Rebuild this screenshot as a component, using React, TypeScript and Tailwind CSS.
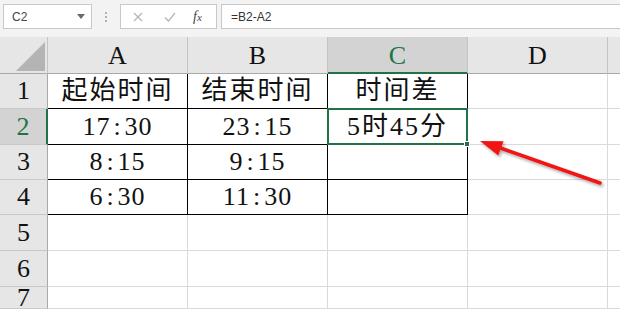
import React from 'react';

const serif = "font-['Liberation_Serif','Noto_Sans_CJK_SC',serif]";

const cols = ['A', 'B', 'C', 'D'];
const rowHeights = ['h-[35px]', 'h-[36px]', 'h-[35px]', 'h-[35px]', 'h-[36px]', 'h-[36px]', 'h-[22px]'];

const data: string[][] = [
  ['起始时间', '结束时间', '时间差', ''],
  ['17:30', '23:15', '5时45分', ''],
  ['8:15', '9:15', '', ''],
  ['6:30', '11:30', '', ''],
  ['', '', '', ''],
  ['', '', '', ''],
  ['', '', '', ''],
];

// SimSun style times: widen the colon like the half-width original
const CellText: React.FC<{ v: string }> = ({ v }) => {
  if (!v.includes(':')) return <span className="tracking-[2px]">{v}</span>;
  const [h, m] = v.split(':');
  return (
    <span className="tracking-[1px]">
      {h}
      <span className="px-[3px]">:</span>
      {m}
    </span>
  );
};

const Toolbar: React.FC = () => (
  <div className="flex h-[37px] items-start bg-[#f3f3f3] pt-[4px]">
    <div className="relative ml-[3px] flex h-[25px] w-[89px] items-center border border-[#c8c8c8] bg-white pl-[8px]">
      <span className="font-['Liberation_Sans',sans-serif] text-[12px] text-[#444]">C2</span>
      <svg className="absolute right-[6px] top-[9px]" width="8" height="5" viewBox="0 0 8 5">
        <path d="M0 0 L8 0 L4 5 Z" fill="#6a6a6a" />
      </svg>
    </div>
    <div className="ml-[12px] flex h-[25px] w-[4px] flex-col items-center justify-center gap-[2px]">
      <span className="h-[2px] w-[2px] bg-[#b0b0b0]" />
      <span className="h-[2px] w-[2px] bg-[#b0b0b0]" />
      <span className="h-[2px] w-[2px] bg-[#b0b0b0]" />
    </div>
    <div className="ml-[12px] flex h-[25px] w-[97px] items-center border border-[#c8c8c8] bg-white">
      <svg className="ml-[12px]" width="10" height="10" viewBox="0 0 10 10">
        <path d="M1 1 L9 9 M9 1 L1 9" stroke="#b4b4b4" strokeWidth="1.2" />
      </svg>
      <svg className="ml-[21px]" width="12" height="10" viewBox="0 0 12 10">
        <path d="M1 5.5 L4.5 9 L11 1" stroke="#b4b4b4" strokeWidth="1.2" fill="none" />
      </svg>
      <span className="ml-[17px] font-['Liberation_Serif',serif] text-[14px] italic text-[#444]">
        f<span className="text-[11px]">x</span>
      </span>
    </div>
    <div className="ml-[4px] flex h-[25px] flex-1 items-center border-y border-l border-[#c8c8c8] bg-white pl-[9px]">
      <span className="font-['Liberation_Sans',sans-serif] text-[12px] text-[#333]">=B2-A2</span>
    </div>
  </div>
);

const Arrow: React.FC = () => (
  <svg className="pointer-events-none absolute left-0 top-0" width="620" height="309" viewBox="0 0 620 309">
    <defs>
      <filter id="sh" x="-20%" y="-50%" width="140%" height="200%">
        <feDropShadow dx="1.5" dy="2" stdDeviation="1.5" floodColor="#000" floodOpacity="0.35" />
      </filter>
    </defs>
    <g filter="url(#sh)">
      <line x1="600" y1="183" x2="496" y2="146.5" stroke="#f01414" strokeWidth="3.5" strokeLinecap="round" />
      <path d="M480 141 L503.5 141.2 L498.2 155.5 Z" fill="#f01414" />
    </g>
  </svg>
);

export default function App() {
  return (
    <div className="relative h-[309px] w-[620px] overflow-hidden bg-white">
      <Toolbar />
      <div className="grid grid-cols-[48px_140px_140px_140px_140px_1fr]">
        {/* header row */}
        <div className="relative h-[37px] border-r border-b border-r-[#c4c4c4] border-b-[#a9a9a9] bg-[#e6e6e6]">
          <svg className="absolute left-[16px] top-[5px]" width="30" height="30" viewBox="0 0 30 30">
            <path d="M29 0 L29 29 L0 29 Z" fill="#b4b4b4" />
          </svg>
        </div>
        {cols.map((c) => (
          <div
            key={c}
            className={
              c === 'C'
                ? `flex h-[37px] items-center justify-center border-r border-b-2 border-r-[#c4c4c4] border-b-[#217346] bg-[#d3d3d3] pt-[2px] text-[26px] leading-none text-[#217346] ${serif}`
                : `flex h-[37px] items-center justify-center border-r border-b border-r-[#c4c4c4] border-b-[#a9a9a9] bg-[#e6e6e6] pt-[1px] text-[26px] leading-none text-[#111] ${serif}`
            }
          >
            {c}
          </div>
        ))}
        <div className="h-[37px] border-b border-b-[#a9a9a9] bg-[#e6e6e6]" />

        {data.map((row, r) => (
          <React.Fragment key={r}>
            <div
              className={
                r === 1
                  ? `flex ${rowHeights[r]} items-center justify-center border-r-2 border-b border-r-[#217346] border-b-[#c9c9c9] bg-[#d3d3d3] text-[26px] leading-none text-[#217346] ${serif}`
                  : `flex ${rowHeights[r]} items-center justify-center border-r border-b border-r-[#a9a9a9] border-b-[#c9c9c9] bg-[#e6e6e6] text-[26px] leading-none text-[#111] ${serif}`
              }
            >
              {r + 1}
            </div>
            {row.map((v, c) => {
              const boxed = r < 4 && c < 3;
              return (
                <div
                  key={c}
                  className={
                    boxed
                      ? `relative flex ${rowHeights[r]} items-center justify-center border-r border-b border-black bg-white text-[26px] leading-none text-[#111] ${serif}`
                      : `relative flex ${rowHeights[r]} items-center justify-center border-r border-b border-[#dadada] bg-white`
                  }
                >
                  {v && <CellText v={v} />}
                  {r === 1 && c === 2 && (
                    <div className="absolute -left-[1px] -top-[1px] -right-[1px] -bottom-[1px] z-10 border-2 border-[#217346]">
                      <div className="absolute -bottom-[4px] -right-[4px] h-[6px] w-[6px] border border-white bg-[#217346]" />
                    </div>
                  )}
                </div>
              );
            })}
            <div className={`${rowHeights[r]} border-b border-[#dadada] bg-white`} />
          </React.Fragment>
        ))}
      </div>
      <Arrow />
    </div>
  );
}
